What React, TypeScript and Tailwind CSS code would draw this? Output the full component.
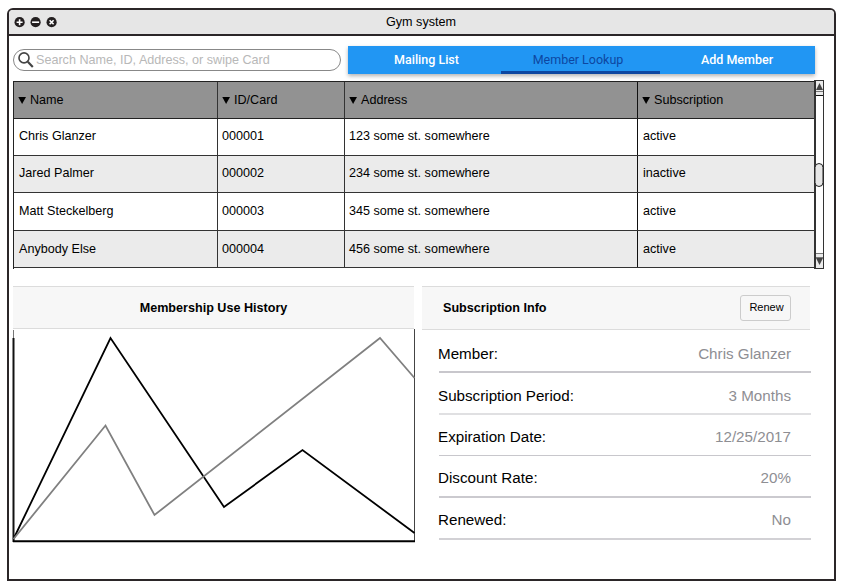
import React from "react";

const members = [
  { name: "Chris Glanzer", id: "000001", address: "123 some st. somewhere", status: "active", row: "h-[37px] bg-white", inset: "pb-[2px]" },
  { name: "Jared Palmer", id: "000002", address: "234 some st. somewhere", status: "inactive", row: "h-[37px] bg-[#ebebeb]", inset: "pb-[2px]" },
  { name: "Matt Steckelberg", id: "000003", address: "345 some st. somewhere", status: "active", row: "h-[38px] bg-white", inset: "pb-px" },
  { name: "Anybody Else", id: "000004", address: "456 some st. somewhere", status: "active", row: "h-[37px] bg-[#ebebeb]", inset: "pb-0" },
];

const details = [
  { label: "Member:", value: "Chris Glanzer", row: "h-[43px] pt-[15px] border-b-2 border-[#c8c7cc]" },
  { label: "Subscription Period:", value: "3 Months", row: "h-[42px] pt-[14px] border-b-2 border-[#e0e0e2]" },
  { label: "Expiration Date:", value: "12/25/2017", row: "h-[41px] pt-[13px] border-b border-[#c8c7cc]" },
  { label: "Discount Rate:", value: "20%", row: "h-[42px] pt-[13px] border-b-2 border-[#cbcacf]" },
  { label: "Renewed:", value: "No", row: "h-[42px] pt-[13px] border-b-2 border-[#d2d1d5]" },
];

const columns = "grid grid-cols-[204px_127px_293px_176px]";

function WindowButton({ children }: { children: React.ReactNode }) {
  return (
    <svg width="11" height="11" viewBox="0 0 11 11" className="block">
      <circle cx="5.6" cy="5.2" r="5.1" fill="#231f20" />
      <g stroke="#fff" strokeWidth="1.6" transform="translate(0.1 -0.3)">{children}</g>
    </svg>
  );
}

function HeaderCell({ children, className }: { children: string; className: string }) {
  return (
    <div className={`flex items-center ${className}`}>
      <svg width="8" height="7" viewBox="0 0 8 7" className="mt-px mr-[4px] block shrink-0">
        <path d="M0.3 0H8L4.1 7Z" fill="#000" />
      </svg>
      {children}
    </div>
  );
}

function Scrollbar() {
  return (
    <div className="mt-[-1px] flex h-[189px] w-[10px] flex-col items-center border border-l-2 border-[#333] bg-white">
      <div className="flex h-[10px] w-full items-center justify-center bg-[#ebebeb]">
        <svg width="7" height="7" viewBox="0 0 7 7"><path d="M0 7H7L3.5 0Z" fill="#444" /></svg>
      </div>
      <div className="h-[5px] w-full border-t border-b border-t-[#777] border-b-[#111] bg-[#ebebeb]" />
      <div className="mt-[67px] h-[24px] w-[9px] shrink-0 -translate-x-[0.5px] rounded-full border border-[#222] bg-[#e6e6e6]" />
      <div className="mt-auto h-[5px] w-full border-y border-[#777] bg-[#ebebeb]" />
      <div className="flex h-[10px] w-full items-start justify-center bg-[#ebebeb]">
        <svg width="7" height="7" viewBox="0 0 7 7"><path d="M0 0H7L3.5 7Z" fill="#444" /></svg>
      </div>
    </div>
  );
}

export default function App() {
  return (
    <div className="h-[587px] w-[842px] overflow-hidden bg-white pt-[8px] pl-[7px] font-['Liberation_Sans',Arial,sans-serif] text-[12.6px] text-black">
      <div className="h-[573px] w-[829px] rounded-t-[6px] border-2 border-[#2b2628]">
        <header className="grid h-[26px] grid-cols-[1fr_auto_1fr] items-center rounded-t-[4px] border-b-2 border-[#2b2628] bg-[#e6e6e6] pl-[5px]">
          <div className="flex gap-[5px]">
            <WindowButton><path d="M5.5 2.5V8.5M2.5 5.5H8.5" /></WindowButton>
            <WindowButton><path d="M2 5.5H9" /></WindowButton>
            <WindowButton><path d="M3.5 3.5L7.5 7.5M7.5 3.5L3.5 7.5" /></WindowButton>
          </div>
          <h1 className="pr-[6px]">Gym system</h1>
        </header>

        <div className="flex h-[45px] pt-[10px] pl-[4px]">
          <div className="mt-[3px] flex h-[22px] w-[328px] items-center rounded-full border border-[#888] pl-[4px]">
            <svg width="17" height="18" viewBox="1 0 17 18" fill="none" stroke="#444" className="mr-px block">
              <circle cx="7" cy="6.9" r="5" strokeWidth="1.6" />
              <path d="M10.8 10.8L15.8 16" strokeWidth="2.2" />
            </svg>
            <span className="text-[#b8b8b8]">Search Name, ID, Address, or swipe Card</span>
          </div>
          <nav className="ml-[7px] grid h-[28px] w-[467px] grid-cols-[153px_159px_155px] bg-[#2196f3] text-center font-['Roboto',sans-serif] text-[12.5px] leading-[27px] font-medium text-white shadow-[0_2px_4px_rgba(0,0,0,0.3)]">
            <div className="pl-[4px]">Mailing List</div>
            <div className="h-[28px] border-b-[3px] border-[#0d47a1] pr-[5px] font-normal text-[#0d47a1]">Member Lookup</div>
            <div className="pr-px">Add Member</div>
          </nav>
        </div>

        <div className="flex pl-[4px]">
          <div className="w-[801px] border-t border-l border-[#222]">
            <div className={`${columns} h-[37px] border-b border-[#222] bg-[#929292]`}>
              <HeaderCell className="border-r border-[#333] pl-[4px]">Name</HeaderCell>
              <HeaderCell className="border-r border-[#333] pl-[4px]">ID/Card</HeaderCell>
              <HeaderCell className="border-r border-[#111] pl-[4px]">Address</HeaderCell>
              <HeaderCell className="pl-[4px]">Subscription</HeaderCell>
            </div>
            {members.map((m) => (
              <div key={m.id} className={`${columns} border-b border-[#333] ${m.row}`}>
                <div className={`flex items-center border-r border-[#333] pl-[5px] ${m.inset}`}>{m.name}</div>
                <div className={`flex items-center border-r border-[#333] pl-[4px] ${m.inset}`}>{m.id}</div>
                <div className={`flex items-center border-r border-[#111] pl-[4px] ${m.inset}`}>{m.address}</div>
                <div className={`flex items-center pl-[5px] ${m.inset}`}>{m.status}</div>
              </div>
            ))}
          </div>
          <Scrollbar />
        </div>

        <div className="mt-[17px] flex gap-[7px] pl-[3px]">
          <section className="w-[403px]">
            <h2 className="ml-px h-[43px] w-[401px] border-y border-[#dcdcdc] bg-[#f7f7f7] text-center leading-[43px] font-bold">
              Membership Use History
            </h2>
            <svg width="404" height="214" viewBox="12 329 404 214" fill="none" className="block">
              <path d="M13.5 330V542" stroke="#777" strokeWidth="1" />
              <path d="M13.5 338V542" stroke="#111" strokeWidth="2" />
              <path d="M414.5 329V542" stroke="#444" strokeWidth="1" />
              <path d="M13 541.3H415" stroke="#000" strokeWidth="2" />
              <path d="M13.5 539L110.5 338L224 507L302.5 450L414.5 533" stroke="#000" strokeWidth="1.8" />
              <path d="M13.5 539L105.5 425.5L154.5 515L380 338L414.5 378" stroke="#808080" strokeWidth="1.8" />
            </svg>
          </section>

          <section className="w-[389px]">
            <div className="flex h-[44px] w-[388px] items-center justify-between border-y border-[#dcdcdc] bg-[#f7f7f7] pr-[19px] pl-[21px]">
              <h2 className="font-bold">Subscription Info</h2>
              <button className="h-[26px] w-[51px] rounded-[3px] border border-[#ccc] pb-px pl-[2px] text-[11px]">Renew</button>
            </div>
            <dl className="pl-[17px] text-[15.2px] leading-[18px]">
              {details.map((d) => (
                <div key={d.label} className={`flex justify-between pr-[20px] ${d.row}`}>
                  <dt className="-ml-px">{d.label}</dt>
                  <dd className="text-[#8e8e93]">{d.value}</dd>
                </div>
              ))}
            </dl>
          </section>
        </div>
      </div>
    </div>
  );
}
